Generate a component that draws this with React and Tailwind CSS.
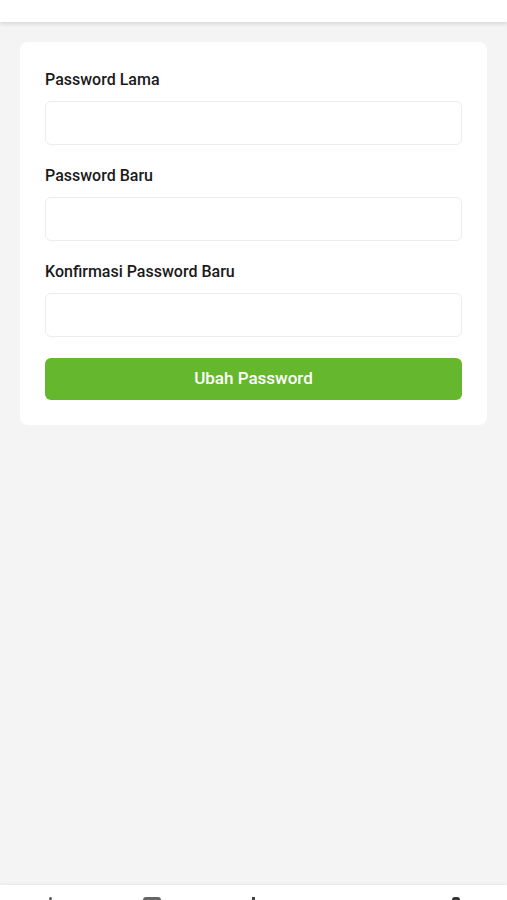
export default function App() {
  const fields = ["Password Lama", "Password Baru", "Konfirmasi Password Baru"]

  return (
    <div className="h-[900px] w-full flex flex-col overflow-hidden bg-[#f4f4f4]" style={{ fontFamily: "Roboto, 'Liberation Sans', sans-serif" }}>
      {/* top bar */}
      <div className="h-[22px] bg-white shadow-[0_2px_4px_rgba(0,0,0,0.12)] relative z-10" />

      <main className="flex-1 pt-[20px] px-[20px]">
        <div className="bg-white rounded-lg px-[25px] pt-[26px] pb-[25px]">
          <form className="flex flex-col gap-[19px]" onSubmit={(e) => e.preventDefault()}>
            {fields.map((label) => (
              <label key={label} className="flex flex-col gap-[10px]">
                <span className="text-[16px] leading-[23px] font-medium text-[#1a1a1a]">{label}</span>
                <input
                  type="password"
                  className="h-[44px] w-full rounded-md border border-[#ececec] bg-white px-3 outline-none"
                />
              </label>
            ))}
            <button
              type="submit"
              className="mt-[2px] h-[42px] w-full rounded-md bg-[#65b72e] text-white text-[17px] font-medium"
            >
              Ubah Password
            </button>
          </form>
        </div>
      </main>

      {/* bottom nav, mostly cut off */}
      <nav className="h-[15px] bg-white shadow-[0_-1px_3px_rgba(0,0,0,0.06)] grid grid-cols-5 justify-items-center items-start pt-[12px]">
        <div className="w-[3px] h-[3px] rounded-full bg-[#555]" />
        <div className="w-[18px] h-[3px] rounded-t-sm bg-[#666]" />
        <div className="w-[3px] h-[3px] bg-[#444]" />
        <div className="w-[3px] h-[3px] bg-transparent" />
        <div className="w-[8px] h-[3px] rounded-t-full bg-[#333]" />
      </nav>
    </div>
  )
}
